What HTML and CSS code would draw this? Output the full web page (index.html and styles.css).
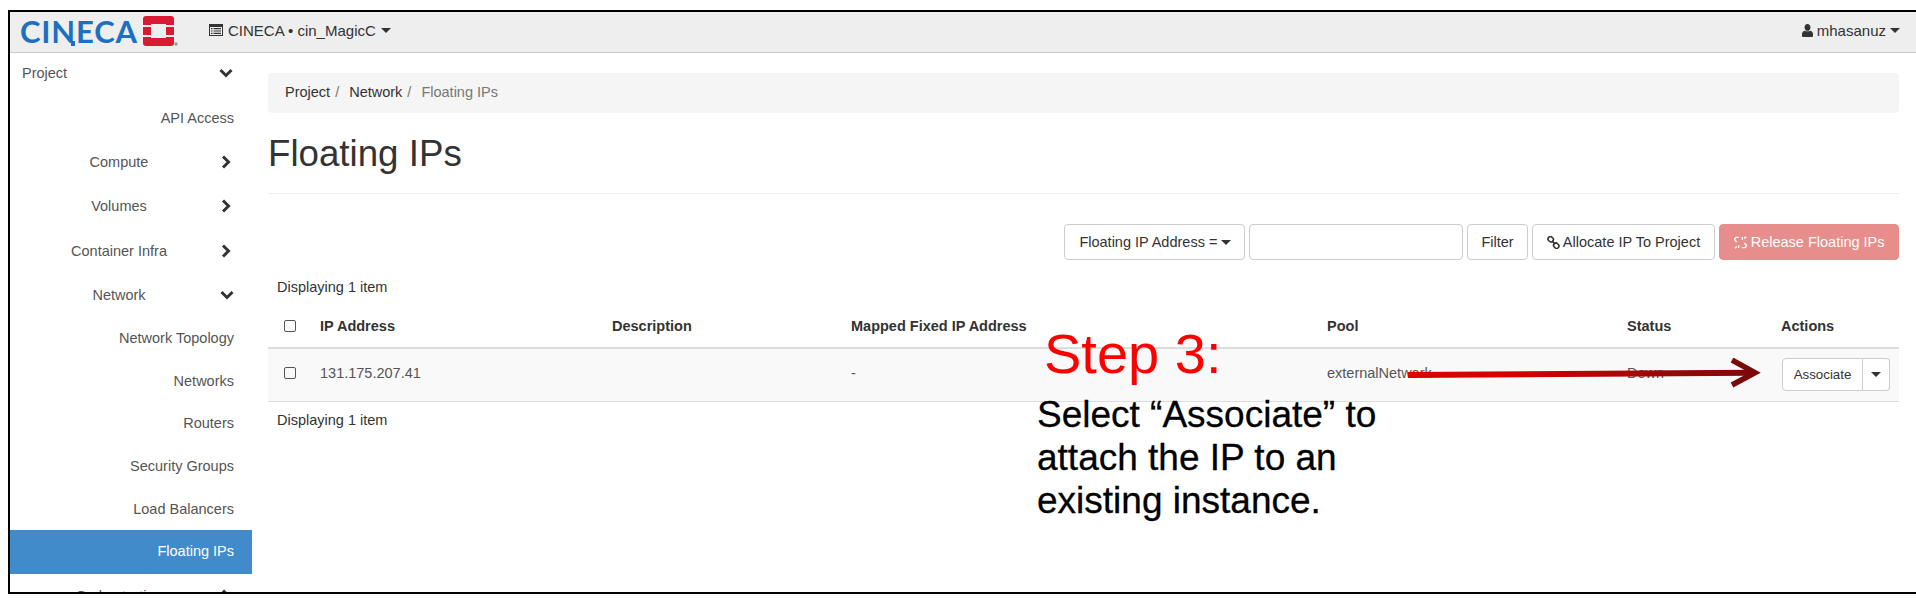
FILE: index.html
```html
<!DOCTYPE html>
<html lang="en">
<head>
    <meta charset="UTF-8">
    <meta name="viewport" content="width=device-width, initial-scale=1.0">
    <title>Floating IPs</title>
    <link rel="stylesheet" href="styles.css">
</head>
<body>
    <div class="frame">
        <header class="navbar">
            <div class="brand">
                <span class="brand-name">CI<span class="brand-n">N</span>ECA</span>
                <svg class="brand-mark" viewBox="0 0 35 30" width="35" height="30">
                    <path fill="#da1a32" d="M3 0H28a3 3 0 0 1 3 3V9H23V8H8V9H0V3a3 3 0 0 1 3-3Z"/>
                    <path fill="#da1a32" d="M0 11H8V19H0ZM23 11H31V19H23Z"/>
                    <path fill="#da1a32" d="M0 21H8V22H23V21H31V27a3 3 0 0 1-3 3H3a3 3 0 0 1-3-3Z"/>
                    <circle cx="33" cy="28" r="1.7" fill="#9a9a9a"/>
                </svg>
            </div>
            <div class="project-picker">
                <svg class="icon-list" viewBox="0 0 14 12" width="14" height="12">
                    <path fill="#333" d="M0 0H14V12H0ZM1 3V11H13V3Z"/>
                    <path fill="#333" d="M2 4H3.5V5.2H2ZM4.5 4H12V5.2H4.5ZM2 6.4H3.5V7.6H2ZM4.5 6.4H12V7.6H4.5ZM2 8.8H3.5V10H2ZM4.5 8.8H12V10H4.5Z"/>
                </svg>
                <span>CINECA • cin_MagicC</span>
                <span class="caret"></span>
            </div>
            <div class="user-menu">
                <svg class="icon-user" viewBox="0 0 12 14" width="11" height="13">
                    <path fill="#333" d="M6 0C7.9 0 9.2 1.5 9.2 3.6S7.9 7.4 6 7.4 2.8 5.7 2.8 3.6 4.1 0 6 0ZM3 7.2C4 8.2 8 8.2 9 7.2 10.8 7.5 12 8.8 12 11V12.6C12 13.4 11.4 14 10.6 14H1.4C.6 14 0 13.4 0 12.6V11C0 8.8 1.2 7.5 3 7.2Z"/>
                </svg>
                <span>mhasanuz</span>
                <span class="caret"></span>
            </div>
        </header>

        <div class="page">
            <nav class="sidebar">
                <div class="nav-top">
                    <span>Project</span>
                    <svg class="chevron" viewBox="0 0 14 10" width="14" height="10"><path d="M1.5 2 7 7.5 12.5 2" /></svg>
                </div>
                <div class="nav-item">API Access</div>
                <div class="nav-group">
                    <span>Compute</span>
                    <svg class="chevron" viewBox="0 0 10 14" width="10" height="14"><path d="M2 1.5 7.5 7 2 12.5" /></svg>
                </div>
                <div class="nav-group">
                    <span>Volumes</span>
                    <svg class="chevron" viewBox="0 0 10 14" width="10" height="14"><path d="M2 1.5 7.5 7 2 12.5" /></svg>
                </div>
                <div class="nav-group">
                    <span>Container Infra</span>
                    <svg class="chevron" viewBox="0 0 10 14" width="10" height="14"><path d="M2 1.5 7.5 7 2 12.5" /></svg>
                </div>
                <div class="nav-group open">
                    <span>Network</span>
                    <svg class="chevron" viewBox="0 0 14 10" width="14" height="10"><path d="M1.5 2 7 7.5 12.5 2" /></svg>
                </div>
                <div class="nav-item">Network Topology</div>
                <div class="nav-item">Networks</div>
                <div class="nav-item">Routers</div>
                <div class="nav-item">Security Groups</div>
                <div class="nav-item">Load Balancers</div>
                <div class="nav-item active">Floating IPs</div>
                <div class="nav-group">
                    <span>Orchestration</span>
                    <svg class="chevron" viewBox="0 0 10 14" width="10" height="14"><path d="M2 1.5 7.5 7 2 12.5" /></svg>
                </div>
            </nav>

            <main class="content">
                <ol class="breadcrumb">
                    <li>Project</li>
                    <li>Network</li>
                    <li class="current">Floating IPs</li>
                </ol>
                <h1 class="page-title">Floating IPs</h1>

                <div class="toolbar">
                    <button class="btn btn-select">Floating IP Address = <span class="caret dark"></span></button>
                    <input class="filter-input" type="text">
                    <button class="btn">Filter</button>
                    <button class="btn btn-allocate">
                        <svg class="icon-link" viewBox="0 0 14 14" width="13" height="13">
                            <g fill="none" stroke="#333" stroke-width="1.7">
                                <rect x="1" y="1" width="6" height="5" rx="2.4" transform="rotate(45 4 3.5)"/>
                                <rect x="7" y="8" width="6" height="5" rx="2.4" transform="rotate(45 10 10.5)"/>
                                <path d="M5.5 5.5 8.5 8.5"/>
                            </g>
                        </svg>
                        Allocate IP To Project
                    </button>
                    <button class="btn btn-danger">
                        <svg class="icon-link" viewBox="0 0 14 14" width="13" height="13">
                            <g fill="none" stroke="#fff" stroke-width="1.5">
                                <path d="M5.5 1.5 3 1.5A2 2 0 0 0 1.5 5L3 6.5"/>
                                <path d="M8.5 12.5H11A2 2 0 0 0 12.5 9L11 7.5"/>
                                <path d="M9 1V4M11 2.5 13 1M5 13V10M3 11.5 1 13"/>
                            </g>
                        </svg>
                        Release Floating IPs
                    </button>
                </div>

                <p class="count">Displaying 1 item</p>
                <table class="ip-table">
                    <thead>
                        <tr>
                            <th class="col-check"><span class="check"></span></th>
                            <th class="col-ip">IP Address</th>
                            <th class="col-desc">Description</th>
                            <th class="col-fixed">Mapped Fixed IP Address</th>
                            <th class="col-pool">Pool</th>
                            <th class="col-status">Status</th>
                            <th>Actions</th>
                        </tr>
                    </thead>
                    <tbody>
                        <tr>
                            <td><span class="check"></span></td>
                            <td>131.175.207.41</td>
                            <td></td>
                            <td>-</td>
                            <td>externalNetwork</td>
                            <td>Down</td>
                            <td class="cell-actions">
                                <div class="btn-group">
                                    <button class="btn btn-sm">Associate</button>
                                    <button class="btn btn-sm btn-toggle"><span class="caret dark"></span></button>
                                </div>
                            </td>
                        </tr>
                    </tbody>
                </table>
                <p class="count count-bottom">Displaying 1 item</p>
            </main>
        </div>

        <!-- slide annotation drawn over the screenshot -->
        <div class="step-title">Step 3:</div>
        <div class="step-text">Select “Associate” to<br>attach the IP to an<br>existing instance.</div>
        <svg class="step-arrow" viewBox="0 0 360 30" width="360" height="30">
            <defs>
                <linearGradient id="arrow-fade" x1="0" x2="1" y1="0" y2="0">
                    <stop offset="0" stop-color="#e00000"/>
                    <stop offset="0.35" stop-color="#d00000"/>
                    <stop offset="1" stop-color="#7a0a0a"/>
                </linearGradient>
            </defs>
            <path d="M0 17 344 14.7" stroke="url(#arrow-fade)" stroke-width="6" fill="none"/>
            <path d="M324 2 347 14.7 324 27" stroke="#7a0a0a" stroke-width="5.5" fill="none"/>
        </svg>
    </div>
</body>
</html>
```

FILE: styles.css
```css
html, body {
    margin: 0;
    padding: 0;
    height: 100%;
    overflow: hidden;
    background: #fff;
}
body {
    font-family: "Liberation Sans", Arial, sans-serif;
    font-size: 14.5px;
    color: #333;
    padding: 10px 0 0 8px;
    box-sizing: border-box;
}
.frame {
    position: relative;
    width: 1920px;
    height: 584px;
    border: 2px solid #000;
    box-sizing: border-box;
    overflow: hidden;
}

/* top bar */
.navbar {
    display: flex;
    align-items: center;
    height: 41px;
    font-size: 15px;
    background: #eee;
    border-bottom: 1px solid #ccc;
    box-sizing: border-box;
}
.brand {
    display: flex;
    align-items: center;
    width: 199px;
    padding: 0 0 3px 10px;
    box-sizing: border-box;
}
.brand-name {
    font-family: Lato, sans-serif;
    font-size: 31px;
    font-weight: 700;
    letter-spacing: 0.8px;
    line-height: 36px;
    color: #1b70c2;
}
.brand-n {
    position: relative;
}
.brand-n::after {
    content: "";
    position: absolute;
    right: 1px;
    top: 29px;
    width: 4px;
    height: 5px;
    background: #1b70c2;
}
.brand-mark {
    margin-left: 5px;
}
.project-picker {
    display: flex;
    align-items: center;
    gap: 5px;
    padding-bottom: 4px;
}
.user-menu {
    display: flex;
    align-items: center;
    gap: 4px;
    margin-left: auto;
    margin-right: 26px;
    padding-bottom: 4px;
}
.caret {
    display: inline-block;
    width: 0;
    height: 0;
    border-top: 5px solid #333;
    border-left: 5px solid transparent;
    border-right: 5px solid transparent;
}
.caret.dark {
    vertical-align: 2px;
}

/* sidebar */
.page {
    display: flex;
}
.sidebar {
    width: 242px;
    flex-shrink: 0;
    color: #555;
}
.nav-top {
    display: flex;
    align-items: center;
    justify-content: space-between;
    height: 41px;
    padding: 0 19px 2px 12px;
    box-sizing: border-box;
    margin-bottom: 3px;
}
.nav-item {
    height: 42.6px;
    line-height: 42.6px;
    padding-right: 18px;
    text-align: right;
}
.nav-group {
    display: flex;
    align-items: center;
    height: 44.4px;
}
.nav-group span {
    width: 218px;
    text-align: center;
}
.nav-group .chevron {
    margin-left: -7px;
}
.nav-group.open .chevron {
    margin-left: -8px;
}
.chevron {
    fill: none;
    stroke: #333;
    stroke-width: 3;
}
.nav-item.active {
    background: #428bca;
    color: #fff;
    height: 44px;
    line-height: 42px;
}

/* main column */
.content {
    flex: 1;
    padding: 20px 27px 0 16px;
}
.breadcrumb {
    display: flex;
    list-style: none;
    margin: 0;
    padding: 0 17px 3px;
    height: 40px;
    box-sizing: border-box;
    align-items: center;
    background: #f5f5f5;
    border-radius: 4px;
}
.breadcrumb li:not(:last-child)::after {
    content: "/";
    padding: 0 10px 0 5px;
    color: #777;
}
.breadcrumb .current {
    color: #777;
}
.page-title {
    margin: 0;
    padding: 20px 0 18px;
    font-size: 36.7px;
    line-height: 42px;
    font-weight: 400;
    border-bottom: 1px solid #eee;
}
.toolbar {
    display: flex;
    justify-content: flex-end;
    gap: 4px;
    margin-top: 30px;
}
.btn {
    font: inherit;
    color: #333;
    height: 36px;
    padding: 0 13px;
    background: #fff;
    border: 1px solid #ccc;
    border-radius: 4px;
    white-space: nowrap;
}
.btn-select {
    padding: 0 13px 0 14px;
}
.btn-allocate {
    padding: 0 14px;
}
.btn-danger {
    padding: 0 13.5px;
    background: #e78d8c;
    border-color: #e78d8c;
    color: #fff;
}
.icon-link {
    vertical-align: -2px;
}
.filter-input {
    width: 214px;
    height: 36px;
    border: 1px solid #ccc;
    border-radius: 4px;
    box-sizing: border-box;
}
.count {
    margin: 17px 0 0 9px;
    line-height: 20px;
}

/* table */
.ip-table {
    width: 100%;
    border-collapse: collapse;
    table-layout: fixed;
    margin-top: 8px;
}
.ip-table th {
    height: 42px;
    padding: 0 0 0 9px;
    text-align: left;
    font-weight: 700;
    border-bottom: 2px solid #ddd;
}
.ip-table td {
    height: 53px;
    padding: 0 0 4px 9px;
    background: #f9f9f9;
    border-bottom: 1px solid #ddd;
    color: #555;
    box-sizing: border-box;
}
.ip-table .cell-actions {
    padding: 0 0 0 10px;
}
.col-check { width: 34px; }
.col-ip { width: 283px; }
.col-desc { width: 230px; }
.col-fixed { width: 467px; }
.col-pool { width: 291px; }
.col-status { width: 145px; }
.check {
    display: block;
    width: 10px;
    height: 10px;
    border: 1px solid #555;
    border-radius: 2px;
    margin-left: 7px;
}
.btn-group {
    display: inline-flex;
    vertical-align: middle;
}
.btn-sm {
    height: 33px;
    width: 81px;
    padding: 0;
    font-size: 13.3px;
    border-radius: 4px 0 0 4px;
}
.btn-toggle {
    width: 27px;
    padding: 0;
    border-left: 0;
    border-radius: 0 4px 4px 0;
}
.count-bottom {
    margin-top: 8px;
}

/* annotation */
.step-title {
    position: absolute;
    left: 1034px;
    top: 311px;
    font-size: 56px;
    line-height: 62px;
    color: #f00;
}
.step-text {
    position: absolute;
    left: 1027px;
    top: 381px;
    font-size: 37px;
    line-height: 43px;
    color: #000;
    -webkit-text-stroke: 0.3px #000;
}
.step-arrow {
    position: absolute;
    left: 1398px;
    top: 346px;
}
```
